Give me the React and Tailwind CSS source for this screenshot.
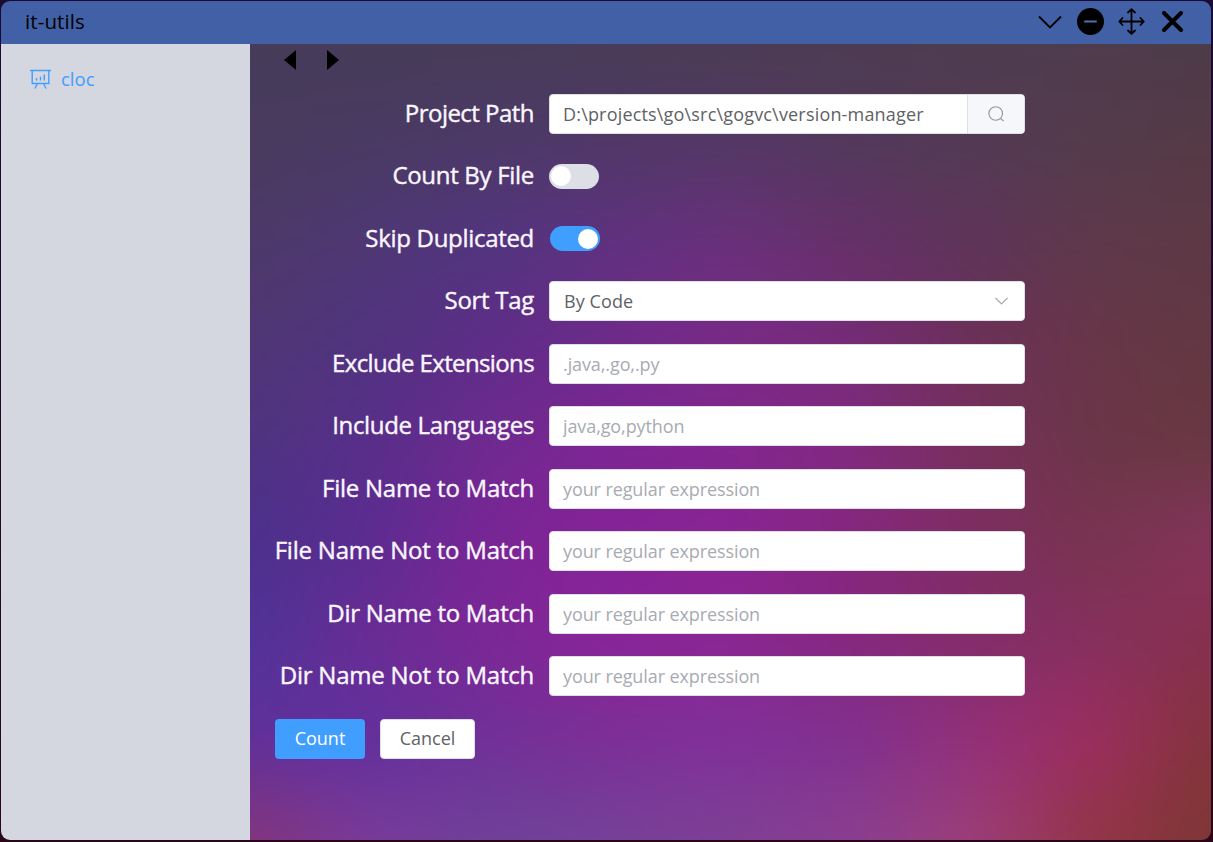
import { useState } from 'react';

const STOPS_X = [0, 12.5, 25, 37.5, 50, 62.5, 75, 87.5, 100];
const MESH = [
  ['#463c5a', '#463c58', '#473c58', '#493c56', '#4b3c54', '#4d3c52', '#4e3c50', '#4e3c4e', '#4d3b49'],
  ['#493b5e', '#4a3a63', '#4d3968', '#503868', '#543866', '#53395c', '#533a54', '#543b4c', '#563a45'],
  ['#4d3969', '#4f3875', '#523580', '#603180', '#6a307c', '#663068', '#5f345b', '#5f394b', '#5e3945'],
  ['#503775', '#50337f', '#5e2d88', '#6e2a8a', '#7a2a86', '#762b78', '#6c3058', '#683648', '#633843'],
  ['#4e3480', '#582e8a', '#702a90', '#7e2595', '#832690', '#812a80', '#78305c', '#6b3648', '#683841'],
  ['#4b318c', '#5c2c92', '#7a2596', '#862398', '#8b2495', '#872680', '#7f2d62', '#78344f', '#86345c'],
  ['#503498', '#6a2c94', '#7c2896', '#8a249a', '#8b2692', '#86287e', '#822d6b', '#86305f', '#87304e'],
  ['#60309a', '#62309e', '#703098', '#7c2f96', '#81309a', '#803090', '#94307a', '#9e2d60', '#83343c'],
  ['#85357a', '#7a3b9a', '#6e4298', '#754298', '#7e4094', '#8a3f90', '#9c3f7a', '#933545', '#7d3735'],
];

function Wallpaper() {
  return (
    <svg className="absolute inset-0 h-full w-full" viewBox="0 0 961 800" preserveAspectRatio="none" aria-hidden="true">
      <defs>
        {MESH.map((row, i) => (
          <linearGradient key={i} id={`row${i}`} gradientUnits="userSpaceOnUse" x1="0" x2="961" y1="0" y2="0">
            {row.map((c, j) => (
              <stop key={j} offset={`${STOPS_X[j]}%`} stopColor={c} />
            ))}
          </linearGradient>
        ))}
        {MESH.map((_, i) => (
          <linearGradient key={i} id={`fade${i}`} gradientUnits="userSpaceOnUse" x1="0" x2="0" y1={(i - 1) * 100} y2={i * 100}>
            <stop offset="0" stopColor="#fff" stopOpacity="0" />
            <stop offset="1" stopColor="#fff" stopOpacity="1" />
          </linearGradient>
        ))}
        {MESH.map((_, i) => (
          <mask key={i} id={`mask${i}`} maskUnits="userSpaceOnUse" x="-100" y="-100" width="1161" height="1000">
            <rect x="-100" y="-100" width="1161" height="1000" fill={`url(#fade${i})`} />
          </mask>
        ))}
        <filter id="soften" filterUnits="userSpaceOnUse" x="-100" y="-100" width="1161" height="1000" colorInterpolationFilters="sRGB">
          <feGaussianBlur stdDeviation="26" />
        </filter>
      </defs>
      <g filter="url(#soften)">
        {MESH.map((_, i) => (
          <rect
            key={i}
            x="-100"
            y="-100"
            width="1161"
            height="1000"
            fill={`url(#row${i})`}
            mask={i ? `url(#mask${i})` : undefined}
          />
        ))}
      </g>
    </svg>
  );
}

function TitleBar() {
  return (
    <header className="flex h-[43px] shrink-0 items-center justify-between bg-[#4260a6] pl-6 pr-7">
      <h1 className="pb-[3px] text-[20.5px] tracking-[0.1px] text-black">it-utils</h1>
      <div className="flex items-center pb-[2px] text-black">
        <svg className="mr-[15px] h-[14px] w-6" viewBox="0 0 24 14" fill="none" stroke="currentColor" strokeWidth="1.8">
          <path d="M1 1.5 12 12.5 23 1.5" />
        </svg>
        <svg className="mr-[14px] size-[27px]" viewBox="0 0 28 28">
          <circle cx="14" cy="14" r="14" fill="currentColor" />
          <path d="M7.5 14h13" stroke="#5570b0" strokeWidth="2" />
        </svg>
        <svg className="mr-[17px] size-[27px]" viewBox="0 0 27 27" fill="none" stroke="currentColor" strokeWidth="1.8" strokeLinecap="round" strokeLinejoin="round">
          <path d="M13.5 1.5v24M1.5 13.5h24M10 4.5l3.5-3.3L17 4.5M10 22.5l3.5 3.3 3.5-3.3M4.5 10l-3.3 3.5L4.5 17M22.5 10l3.3 3.5-3.3 3.5" />
        </svg>
        <svg className="size-[21px]" viewBox="0 0 21 21" fill="none" stroke="currentColor" strokeWidth="4" strokeLinecap="round">
          <path d="M2 2l17 17M19 2 2 19" />
        </svg>
      </div>
    </header>
  );
}

function BoardIcon() {
  return (
    <svg className="h-5 w-[21px]" viewBox="0 0 21 20" fill="none" stroke="currentColor" strokeWidth="1.4">
      <path d="M0 1.5h21M2.2 1.5v13h16.6v-13M7.5 14.5l-2.5 5M13.5 14.5l2.5 5M6.5 11.5V9M10.5 11.5V7.7M14.3 11.5v-6" />
    </svg>
  );
}

function Sidebar() {
  return (
    <aside className="w-[249px] shrink-0 bg-[#d4d7df] pt-[17px]">
      <a className="flex h-9 items-center pl-[29px] text-[#409eff]">
        <BoardIcon />
        <span className="ml-[10px] pb-px text-[18.5px]">cloc</span>
      </a>
    </aside>
  );
}

function Row({ label, tracking = 'tracking-[-0.3px]', children }) {
  return (
    <div className="flex h-10 items-center">
      <label className={`flex w-[259px] shrink-0 justify-end whitespace-nowrap pb-0.5 text-[24px] text-[#faf6fd] [-webkit-text-stroke:0.4px_#faf6fd] ${tracking}`}>
        {label}
      </label>
      <div className="ml-[15px] flex w-[476px] items-center">{children}</div>
    </div>
  );
}

const BOX = 'h-10 w-full rounded-[4px] border border-[#dcdfe6] bg-white text-[18px] text-[#606266] outline-none';

function Field({ placeholder }) {
  return <input className={`${BOX} px-[13px] tracking-[-0.1px] placeholder:text-[#a8abb2]`} placeholder={placeholder} />;
}

function Toggle({ initial }) {
  const [on, setOn] = useState(initial);
  return (
    <button
      role="switch"
      aria-checked={on}
      onClick={() => setOn(!on)}
      className={`flex h-[25px] w-[50px] items-center rounded-full ${on ? 'ml-px justify-end bg-[#409eff] pr-0.5' : 'justify-start bg-[#dcdfe6] pl-0.5'}`}
    >
      <span className="size-5 rounded-full bg-white" />
    </button>
  );
}

const FIELDS = [
  ['Exclude Extensions', '.java,.go,.py', 'tracking-[-0.63px]'],
  ['Include Languages', 'java,go,python', 'tracking-[-0.35px]'],
  ['File Name to Match', 'your regular expression', 'tracking-[-0.25px]'],
  ['File Name Not to Match', 'your regular expression', 'tracking-[-0.2px]'],
  ['Dir Name to Match', 'your regular expression', 'tracking-[-0.3px]'],
  ['Dir Name Not to Match', 'your regular expression', 'tracking-[-0.23px]'],
];

export default function App() {
  return (
    <div className="flex h-[842px] w-[1213px] bg-[linear-gradient(to_bottom,#1a0b35,#2a0718)] pb-[2px] pl-px pr-[2px] pt-px font-['Open_Sans','Noto_Sans',sans-serif]">
      <div className="flex flex-1 flex-col overflow-hidden rounded-[9px]">
        <TitleBar />
        <div className="flex min-h-0 flex-1">
          <Sidebar />
          <main className="relative min-w-0 flex-1 overflow-hidden">
            <Wallpaper />
            <div className="relative pl-[25px]">
              <nav className="flex h-[49.9px] items-start gap-[31px] pl-[9px] pt-[6px]">
                <svg className="h-5 w-3" viewBox="0 0 12 20"><path d="M12 0v20L0 10z" /></svg>
                <svg className="h-5 w-3" viewBox="0 0 12 20"><path d="M0 0v20L12 10z" /></svg>
              </nav>
              <form className="flex flex-col gap-[22.5px]" onSubmit={(e) => e.preventDefault()}>
                <Row label="Project Path" tracking="tracking-[-0.53px]">
                  <div className={`${BOX} flex overflow-hidden`}>
                    <input className="min-w-0 flex-1 px-[13px] pt-px tracking-[0.18px] outline-none" defaultValue="D:\projects\go\src\gogvc\version-manager" />
                    <button className="flex w-[57px] items-center justify-center border-l border-[#dcdfe6] bg-[#f5f7fa] text-[#909399]">
                      <svg className="size-4" viewBox="0 0 16 16" fill="none" stroke="currentColor" strokeWidth="1.1">
                        <circle cx="7.7" cy="7.5" r="6.8" />
                        <path d="M12.5 12.3l3 2.7" />
                      </svg>
                    </button>
                  </div>
                </Row>
                <Row label="Count By File"><Toggle initial={false} /></Row>
                <Row label="Skip Duplicated"><Toggle initial={true} /></Row>
                <Row label="Sort Tag">
                  <div className={`${BOX} flex items-center justify-between pl-[14px] pr-4`}>
                    <span className="tracking-[0.1px]">By Code</span>
                    <svg className="h-2 w-[13px]" viewBox="0 0 13 8" fill="none" stroke="#a8abb2" strokeWidth="1.2">
                      <path d="M.5 1l6 6 6-6" />
                    </svg>
                  </div>
                </Row>
                {FIELDS.map(([label, placeholder, tracking]) => (
                  <Row key={label} label={label} tracking={tracking}><Field placeholder={placeholder} /></Row>
                ))}
                <div className="flex gap-[15px] text-[18px]">
                  <button className="h-10 w-[90px] rounded-[4px] bg-[#409eff] pb-px text-white">Count</button>
                  <button className="h-10 w-[95px] rounded-[4px] border border-[#dcdfe6] bg-white pb-px text-[#606266]">Cancel</button>
                </div>
              </form>
            </div>
          </main>
        </div>
      </div>
    </div>
  );
}
